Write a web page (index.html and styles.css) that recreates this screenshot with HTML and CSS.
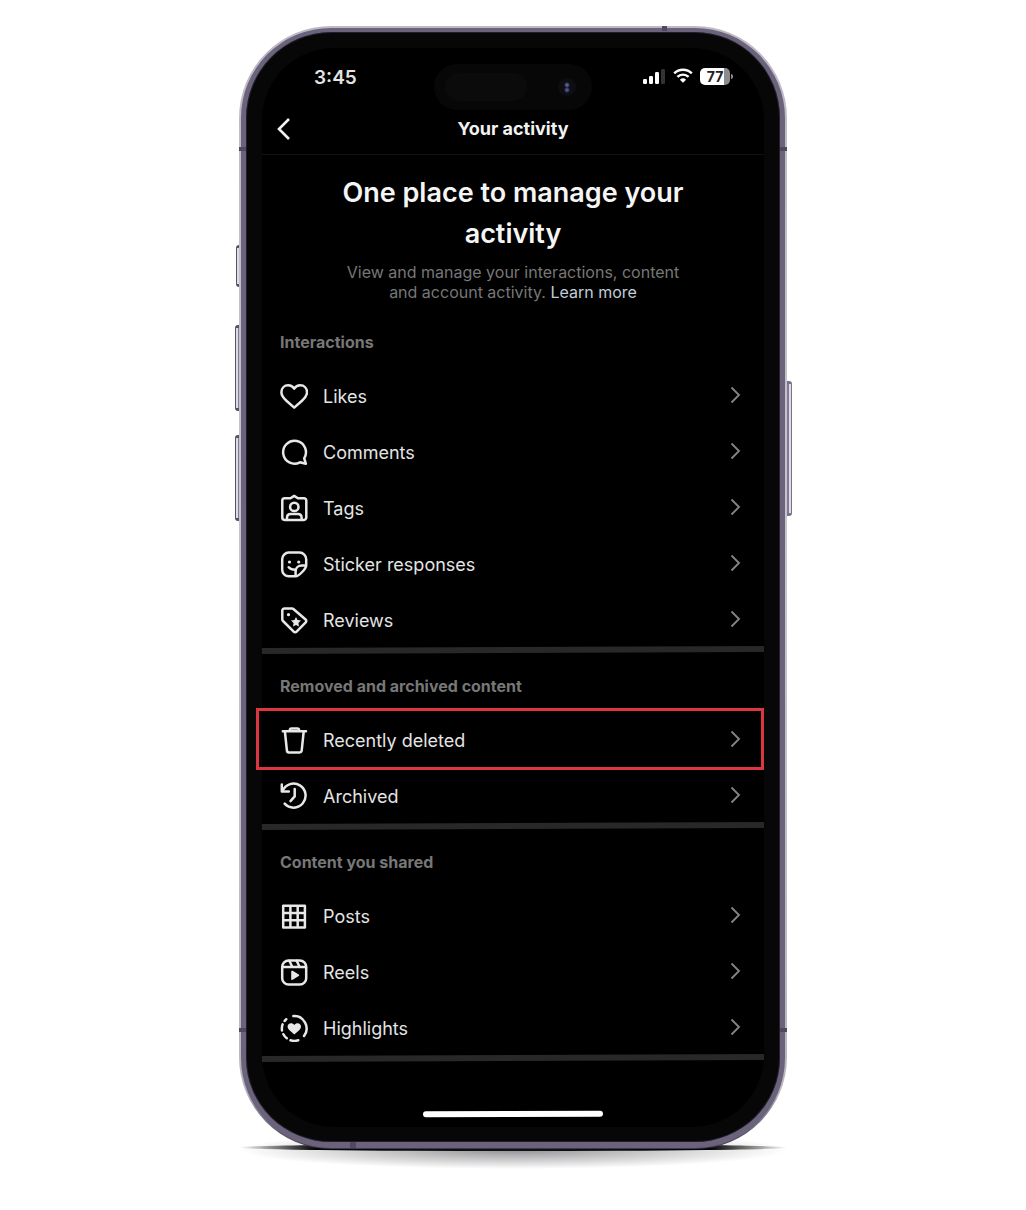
FILE: index.html
```html
<!DOCTYPE html>
<html lang="en">
<head>
<meta charset="utf-8">
<meta name="viewport" content="width=device-width, initial-scale=1">
<title>Your activity</title>
<link rel="stylesheet" href="styles.css">
</head>
<body>
<svg class="sprite" aria-hidden="true">
  <symbol id="next" viewBox="0 0 12 18"><path d="M1.500 1.500 9 9l-7.500 7.500"/></symbol>
</svg>
<div class="stage">
  <div class="phone">
    <span class="key key-action"></span>
    <span class="key key-up"></span>
    <span class="key key-down"></span>
    <span class="key key-power"></span>
    <span class="band band-side band-high"></span>
    <span class="band band-side band-low"></span>
    <span class="band band-top"></span>
    <span class="band band-bottom"></span>
    <div class="bezel">
      <div class="screen">
        <div class="status">
          <span class="time">3:45</span>
          <span class="island"><span class="speaker"></span><span class="camera"></span></span>
          <span class="indicators">
            <svg class="signal" viewBox="0 0 24 16" aria-hidden="true"><rect x="1" y="11" width="4" height="5" rx="1.3"/><rect x="7" y="8" width="4" height="8" rx="1.3"/><rect x="13" y="4" width="4" height="12" rx="1.3"/><rect class="dim" x="19" y="1" width="4" height="15" rx="1.3"/></svg>
            <svg class="wifi" viewBox="0 0 20 16" aria-hidden="true"><path d="M1.2 5.4a12.6 12.6 0 0 1 17.6 0M4.4 8.9a8 8 0 0 1 11.2 0"/><path class="solid" d="M10 14.8 6.9 11.7a4.5 4.5 0 0 1 6.2 0z"/></svg>
            <span class="battery">77</span>
          </span>
        </div>
        <header class="nav">
          <button class="back" type="button" aria-label="Back"><svg viewBox="0 0 16 24" aria-hidden="true"><path d="M13 2 3 12l10 10"/></svg></button>
          <h1 class="nav-title">Your activity</h1>
        </header>
        <main>
          <div class="intro">
            <h2 class="headline">One place to manage your activity</h2>
            <p class="lead">View and manage your interactions, content and account activity. <a class="more" href="#">Learn more</a></p>
          </div>
          <section class="group">
            <h3 class="group-title">Interactions</h3>
            <a class="row" href="#"><svg class="icon" viewBox="0 0 28 28"><path d="M14.2 6.6C15.6 4.4 17.9 3.3 20.2 3.3c4 0 6.800 3 6.800 7 0 3.700-2.300 6-5 8.400l-7.800 6.900-7.800-6.900c-2.700-2.400-5-4.700-5-8.400 0-4 2.800-7 6.800-7 2.300 0 4.600 1.100 6 3.300z"/></svg><span class="label">Likes</span><svg class="next"><use href="#next"/></svg></a>
            <a class="row" href="#"><svg class="icon" viewBox="0 0 28 28"><path d="M24.2 20.3A11.4 11.4 0 1 0 19.9 24.3L25.9 25.8z"/></svg><span class="label">Comments</span><svg class="next"><use href="#next"/></svg></a>
            <a class="row" href="#"><svg class="icon" viewBox="0 0 28 28"><path d="M10.5 4.3 14.2 1.9l3.7 2.4H24a2.3 2.3 0 0 1 2.3 2.3v17A2.3 2.3 0 0 1 24 25.9H4.6a2.3 2.3 0 0 1-2.3-2.3v-17a2.3 2.3 0 0 1 2.3-2.3z"/><circle cx="14.3" cy="12.9" r="4.2"/><path d="M7 25.5v-1.8c0-2.2 1.5-3.8 3.7-3.8h7.2c2.2 0 3.7 1.6 3.7 3.8v1.8"/></svg><span class="label">Tags</span><svg class="next"><use href="#next"/></svg></a>
            <a class="row" href="#"><svg class="icon" viewBox="0 0 28 28"><path d="M26.2 15.4V9.2a6.6 6.6 0 0 0-6.6-6.6H8.8a6.6 6.6 0 0 0-6.6 6.6v10.5a6.6 6.6 0 0 0 6.6 6.6h6.9c3.2 0 10.5-7.8 10.5-10.9zM26 15.6h-4c-3.700 0-6.400 2.300-6.400 5.600v5"/><path d="M8.700 17.300c1.400 1.700 3.500 2.600 6.900 2.500"/><circle class="solid" cx="9.500" cy="12" r="1.600"/><circle class="solid" cx="18.700" cy="12" r="1.600"/></svg><span class="label">Sticker responses</span><svg class="next"><use href="#next"/></svg></a>
            <a class="row" href="#"><svg class="icon" viewBox="0 0 28 28"><path d="M2.300 4.800a2.200 2.200 0 0 1 2.200-2.200h7.500c.6 0 1.200.2 1.700.6l11.900 10.300a2 2 0 0 1 .1 2.900l-9.100 9.200a2 2 0 0 1-2.900 0L3 15c-.4-.5-.7-1-.7-1.600z"/><circle class="solid" cx="8.500" cy="8.700" r="1.600"/><path class="solid" d="m16 11 1.500 3.100 3.500.5-2.600 2.500.6 3.500-3-1.700-3 1.700.6-3.500-2.600-2.500 3.500-.5z"/></svg><span class="label">Reviews</span><svg class="next"><use href="#next"/></svg></a>
          </section>
          <section class="group">
            <h3 class="group-title">Removed and archived content</h3>
            <a class="row row-marked" href="#"><svg class="icon" viewBox="0 0 28 28"><path d="M2.800 5.300h23.200M9.800 5V4a1.600 1.600 0 0 1 1.600-1.600h6A1.600 1.600 0 0 1 19 4v1M4.900 5.500l2 19a2.100 2.100 0 0 0 2.100 1.900h10.600a2.100 2.100 0 0 0 2.100-1.900l2-19"/></svg><span class="label">Recently deleted</span><svg class="next"><use href="#next"/></svg></a>
            <a class="row" href="#"><svg class="icon" viewBox="0 0 28 28"><path d="M2.600 8.800A12 12 0 1 1 4.700 21.700"/><path d="M1.800 2.600v6.900h7M14.700 7v7.400l-4.200 4.700"/></svg><span class="label">Archived</span><svg class="next"><use href="#next"/></svg></a>
          </section>
          <section class="group">
            <h3 class="group-title">Content you shared</h3>
            <a class="row" href="#"><svg class="icon" viewBox="0 0 28 28"><path d="M3.200 3.700h21.700v21.700H3.200zM10.400 3.700v21.700M17.700 3.700v21.700M3.200 10.900h21.700M3.200 18.200h21.700"/></svg><span class="label">Posts</span><svg class="next"><use href="#next"/></svg></a>
            <a class="row" href="#"><svg class="icon" viewBox="0 0 28 28"><rect x="2.200" y="2.600" width="24" height="24" rx="6.400"/><path d="M2.500 9h23.500M9.300 2.800 12.400 9M16.600 2.800 19.700 9"/><path class="solid" d="M11.200 13.600c0-.8.800-1.200 1.500-.8l6 3.700c.7.400.7 1.200 0 1.600l-6 3.700c-.7.400-1.500 0-1.500-.8z"/></svg><span class="label">Reels</span><svg class="next"><use href="#next"/></svg></a>
            <a class="row" href="#"><svg class="icon" viewBox="0 0 28 28"><path d="M13.400 2.100A12.400 12.400 0 0 1 24 22M18.300 26.200A12.400 12.400 0 0 1 10.500 26.300M6.800 24.300A12.400 12.400 0 0 1 3.400 20.200M2 16.500A12.400 12.400 0 0 1 2.600 10.400M4.600 6.900A12.400 12.400 0 0 1 6.200 5.200"/><path class="solid" d="M14.300 20.600 9.200 15.900c-1.200-1.100-1.600-2.100-1.600-3.300 0-2 1.500-3.400 3.300-3.400 1.400 0 2.600.6 3.400 1.900.8-1.300 2-1.900 3.400-1.900 1.800 0 3.300 1.400 3.300 3.400 0 1.200-.4 2.200-1.600 3.300z"/></svg><span class="label">Highlights</span><svg class="next"><use href="#next"/></svg></a>
          </section>
        </main>
        <div class="home"></div>
      </div>
    </div>
  </div>
</div>
</body>
</html>
```
FILE: styles.css
```css
* { box-sizing: border-box; }
body {
  margin: 0;
  background: #fff;
  color: #e4e4e4;
  font-family: Inter, "Liberation Sans", sans-serif;
}
h1, h2, h3, p { margin: 0; }
a { color: inherit; text-decoration: none; }
.sprite { display: none; }
.stage { padding: 26px 16px 60px; }

/* Device body */
.phone {
  position: relative;
  max-width: 548px;
  margin: 0 auto;
  padding: 2px 2px 1px;
  border-radius: 92px;
  background: linear-gradient(#bdbac4, #c8c5cf 50%, #b9b6c0 95%, #3c384c);
}
.phone::before,
.phone::after {
  content: "";
  position: absolute;
  z-index: -1;
  left: 0;
  right: 0;
  border-radius: 50%;
}
.phone::before {
  bottom: -2px;
  height: 7px;
  background: linear-gradient(90deg, transparent, #000 14%, #000 86%, transparent);
}
.phone::after {
  bottom: -20px;
  height: 38px;
  background: radial-gradient(closest-side, rgba(40, 38, 44, .5), transparent);
}
.bezel {
  padding: 16px 16px 15px;
  border: 5px solid #6a637b;
  border-width: 4px 5px 6px;
  border-radius: 90px;
  background: #070707;
  box-shadow: inset 0 0 0 1px #221f2d;
}
.key {
  position: absolute;
  z-index: -1;
  left: -4px;
  width: 8px;
  height: 86px;
  border: 1px solid #56525f;
  border-width: 3px 1px;
  border-radius: 3px;
  background: linear-gradient(90deg, #dedbe6 2px, #817b93 2px);
}
.key-action { top: 219px; height: 42px; left: -3px; }
.key-up { top: 299px; }
.key-down { top: 409px; }
.key-power { top: 355px; height: 135px; left: auto; right: -5px; transform: scaleX(-1); border-color: #77728a; }
.band { position: absolute; background: #4f4a5e; }
.band-side { left: 0; right: 0; height: 4px; background: linear-gradient(90deg, #4f4a5e 7px, transparent 7px calc(100% - 7px), #4f4a5e calc(100% - 7px)); }
.band-high { top: 121px; }
.band-low { bottom: 117px; }
.band-top { top: 0; right: 120px; width: 5px; height: 5px; }
.band-bottom { bottom: 1px; left: 111px; width: 6px; height: 6px; }

/* Screen */
.screen { padding-bottom: 10px; border-radius: 72px; background: #000; }
.status {
  display: grid;
  grid-template-columns: 1fr 158px 1fr;
  padding-top: 16px;
}
.time {
  padding-left: 52px;
  font-size: 19px;
  font-weight: 600;
  line-height: 28px;
}
.island {
  display: flex;
  align-items: center;
  justify-content: space-between;
  height: 46px;
  padding: 0 16px 0 11px;
  border-radius: 23px;
  background: #070707;
}
.speaker { width: 82px; height: 28px; border-radius: 14px; background: #0b0b0b; }
.camera {
  width: 18px;
  height: 18px;
  border-radius: 50%;
  background:
    radial-gradient(circle at 9px 7px, #5a5a98 1px, transparent 3px),
    radial-gradient(circle at 9px 12px, #5050a0 1px, transparent 3px),
    #0e0e12;
}
.indicators {
  display: flex;
  align-items: center;
  justify-content: flex-end;
  gap: 7px;
  height: 24px;
  padding-right: 34px;
}
.signal { width: 24px; height: 16px; fill: #fff; }
.dim { fill: #333; }
.wifi { width: 20px; height: 16px; fill: none; stroke: #fff; stroke-width: 2.4; }
.wifi .solid { fill: #fff; stroke: none; }
.battery {
  position: relative;
  width: 30px;
  height: 17px;
  border-radius: 5px;
  background: linear-gradient(90deg, #fff 80%, #8b8b8b 80%);
  color: #222;
  font-size: 14px;
  font-weight: 700;
  line-height: 17px;
  text-align: center;
}
.battery::after {
  content: "";
  position: absolute;
  top: 6px;
  right: -3px;
  width: 2px;
  height: 5px;
  border-radius: 0 2px 2px 0;
  background: #8b8b8b;
}
.nav {
  display: grid;
  grid-template-columns: 1fr auto 1fr;
  align-items: center;
  height: 45px;
  padding: 0 14px 6px;
  border-bottom: 1px solid #121212;
}
.back {
  width: 16px;
  height: 24px;
  padding: 0;
  border: 0;
  background: none;
}
.back svg { display: block; width: 16px; height: 24px; fill: none; stroke: #f2f2f2; stroke-width: 2.6; }
.nav-title { font-size: 18px; font-weight: 700; line-height: 24px; color: #f2f2f2; }

.intro { padding: 17px 70px 7px; text-align: center; }
.headline {
  padding-bottom: 8px;
  color: #f5f5f5;
  font-size: 27px;
  font-weight: 600;
  line-height: 41px;
}
.lead { color: #777; font-size: 16px; line-height: 20px; }
.more { display: inline-block; color: #c3ced8; }

.group { position: relative; padding: 23px 0 6px; }
.group::after {
  content: "";
  position: absolute;
  bottom: 0;
  left: 0;
  right: 0;
  height: 6px;
  background: #282828;
  transform: rotate(-0.2deg);
}
.group-title {
  padding: 0 18px 15px;
  color: #777;
  font-size: 16px;
  font-weight: 700;
  line-height: 20px;
}
.row {
  display: flex;
  align-items: center;
  gap: 15px;
  position: relative;
  height: 56px;
  padding: 1px 22px 0 18px;
  font-size: 18px;
  line-height: 24px;
}
.label { padding-top: 2px; }
.icon { width: 28px; height: 28px; fill: none; stroke: #e8e8e8; stroke-width: 2.5; stroke-linejoin: round; stroke-linecap: round; }
.icon .solid { fill: #e8e8e8; stroke: none; }
.next { width: 12px; height: 18px; margin: 0 0 1px auto; fill: none; stroke: #858585; stroke-width: 1.8; }
.row-marked::after {
  content: "";
  position: absolute;
  z-index: 1;
  inset: -3px 0 -3px -6px;
  border: 3px solid #dc3640;
}
.home {
  width: 180px;
  height: 6px;
  margin: 0 auto;
  border-radius: 3px;
  background: #fff;
  transform: rotate(-0.2deg);
}
main { padding-bottom: 50px; }
```
